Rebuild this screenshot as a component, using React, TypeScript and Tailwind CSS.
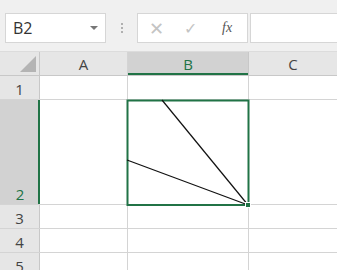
import React from "react";

const rows = [
  { n: "1", h: "h-[24px]" },
  { n: "2", h: "h-[105px]", sel: true },
  { n: "3", h: "h-[24px]" },
  { n: "4", h: "h-[24px]" },
  { n: "5", h: "h-[24px]" },
];

export default function App() {
  return (
    <div className="relative h-[270px] w-[337px] overflow-hidden bg-white font-['Open_Sans',sans-serif] text-[#444]">
      {/* toolbar */}
      <div className="flex h-[52px] items-start border-b border-[#dcdcdc] bg-[#f0f0f0] pt-[13px]">
        <div className="ml-[5px] flex h-[30px] w-[101px] items-center justify-between border border-[#d6d6d6] bg-white px-[7px]">
          <span className="text-[16px] leading-none text-[#333]">B2</span>
          <span className="h-0 w-0 border-x-[4px] border-t-[4px] border-x-transparent border-t-[#777]" />
        </div>
        <div className="flex h-[30px] w-[31px] flex-col items-center justify-center gap-[2px]">
          <span className="size-[2px] bg-[#b0b0b0]" />
          <span className="size-[2px] bg-[#b0b0b0]" />
          <span className="size-[2px] bg-[#b0b0b0]" />
        </div>
        <div className="flex h-[30px] w-[111px] items-center border border-[#d6d6d6] bg-white">
          <span className="ml-[11px] text-[18px] leading-none text-[#c4c4c4]">✕</span>
          <span className="ml-[20px] text-[16px] leading-none text-[#c4c4c4]">✓</span>
          <span className="ml-[25px] font-['Liberation_Serif',serif] text-[14px] italic leading-none text-[#555]">fx</span>
        </div>
        <div className="ml-[2px] h-[30px] flex-1 border border-r-0 border-[#d6d6d6] bg-white" />
      </div>

      {/* column headers */}
      <div className="flex h-[24px] border-b border-[#c8c8c8] bg-[#e6e6e6] text-[15px] leading-none">
        <div className="relative w-[40px] border-r border-[#c8c8c8]">
          <div className="absolute bottom-[3px] right-[3px] h-0 w-0 border-b-[16px] border-l-[16px] border-b-[#b4b4b4] border-l-transparent" />
        </div>
        <div className="flex w-[88px] items-end justify-center border-r border-[#d4d4d4] pb-[3px]">A</div>
        <div className="flex w-[121px] items-end justify-center border-r border-[#c8c8c8] bg-[#d2d2d2] pb-[3px] text-[#217346] shadow-[inset_0_-2px_0_#217346]">B</div>
        <div className="flex flex-1 items-end justify-center pb-[3px]">C</div>
      </div>

      {/* rows */}
      {rows.map((r) => (
        <div key={r.n} className={`flex ${r.h} border-b border-[#d4d4d4]`}>
          <div
            className={`flex w-[40px] items-end justify-center pb-[2px] text-[15px] leading-none ${
              r.sel ? "bg-[#d2d2d2] text-[#217346] shadow-[inset_-2px_0_0_#217346]" : "border-r border-[#c8c8c8] bg-[#e6e6e6]"
            }`}
          >
            {r.n}
          </div>
          <div className="w-[88px] border-r border-[#d4d4d4]" />
          <div className="w-[121px] border-r border-[#d4d4d4]" />
          <div className="flex-1" />
        </div>
      ))}

      {/* selection + diagonal lines drawn in cell B2 */}
      <svg className="pointer-events-none absolute left-0 top-0" width="337" height="270">
        <rect x="127.5" y="100.5" width="121" height="104.5" fill="none" stroke="#217346" strokeWidth="2" />
        <line x1="162" y1="100" x2="248" y2="205" stroke="#111" strokeWidth="1.2" />
        <line x1="127" y1="160" x2="248" y2="205" stroke="#111" strokeWidth="1.2" />
        <rect x="245.5" y="202.5" width="5" height="5" fill="#217346" stroke="#fff" strokeWidth="1" />
      </svg>
    </div>
  );
}
